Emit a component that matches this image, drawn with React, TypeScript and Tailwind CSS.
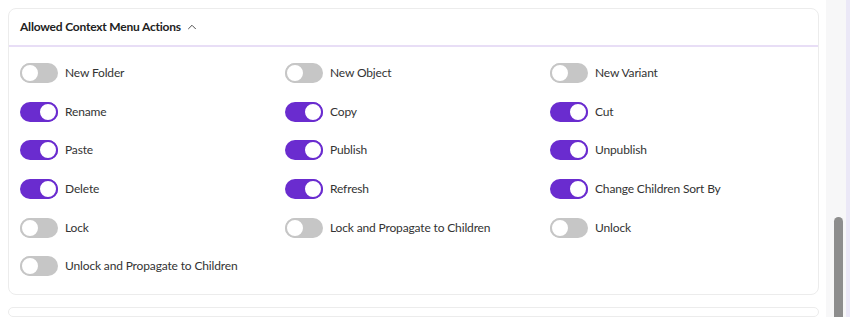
import { ChevronUp } from 'lucide-react'

type Action = { label: string; on: boolean }

const actions: Action[] = [
    { label: 'New Folder', on: false },
    { label: 'New Object', on: false },
    { label: 'New Variant', on: false },
    { label: 'Rename', on: true },
    { label: 'Copy', on: true },
    { label: 'Cut', on: true },
    { label: 'Paste', on: true },
    { label: 'Publish', on: true },
    { label: 'Unpublish', on: true },
    { label: 'Delete', on: true },
    { label: 'Refresh', on: true },
    { label: 'Change Children Sort By', on: true },
    { label: 'Lock', on: false },
    { label: 'Lock and Propagate to Children', on: false },
    { label: 'Unlock', on: false },
    { label: 'Unlock and Propagate to Children', on: false },
]

const Toggle = ({ on }: { on: boolean }) => (
    <span
        className={`relative inline-flex items-center w-[38px] h-[20px] rounded-full shrink-0 ${on ? 'bg-[#6a2ccf] justify-end' : 'bg-[#c6c6c6] justify-start'}`}
    >
        <span
            className={`w-[20px] h-[20px] rounded-full bg-white border-[2px] ${on ? 'border-[#6a2ccf]' : 'border-[#c6c6c6]'}`}
        />
    </span>
)

export default function App() {
    return (
        <div className="w-[850px] h-[317px] flex overflow-hidden bg-white text-[#333] font-['Lato','Liberation_Sans',sans-serif]">
            {/* scroll content */}
            <div className="flex-1 pl-2 pr-[7px] pt-2 flex flex-col gap-3">
                <section className="border border-[#ececec] rounded-lg">
                    <div className="h-[38px] pl-[11px] flex items-center gap-[4px] border-b-2 border-[#e8def6]">
                        <h2 className="text-[12px] tracking-[-0.2px] font-bold text-[#222]">Allowed Context Menu Actions</h2>
                        <ChevronUp size={14} strokeWidth={1.6} className="text-[#444]" />
                    </div>

                    <div className="grid grid-cols-[265px_265px_265px] auto-rows-[38.6px] items-center pl-[11px] pt-[7px] pb-[8px]">
                        {actions.map(a => (
                            <label key={a.label} className="flex items-center gap-[7px] text-[12px] tracking-[-0.15px] text-[#333]">
                                <Toggle on={a.on} />
                                <span>{a.label}</span>
                            </label>
                        ))}
                    </div>
                </section>

                <section className="border border-[#ececec] rounded-lg h-[40px]" />
            </div>

            {/* scrollbar */}
            <div className="w-[20px] bg-[#f7f7f8] flex flex-col justify-end pl-[8px]">
                <div className="w-[9px] h-[100px] rounded-t-full bg-[#8d8d8d]" />
            </div>
            <div className="w-[4px] bg-[#ebe8f7]" />
        </div>
    )
}
